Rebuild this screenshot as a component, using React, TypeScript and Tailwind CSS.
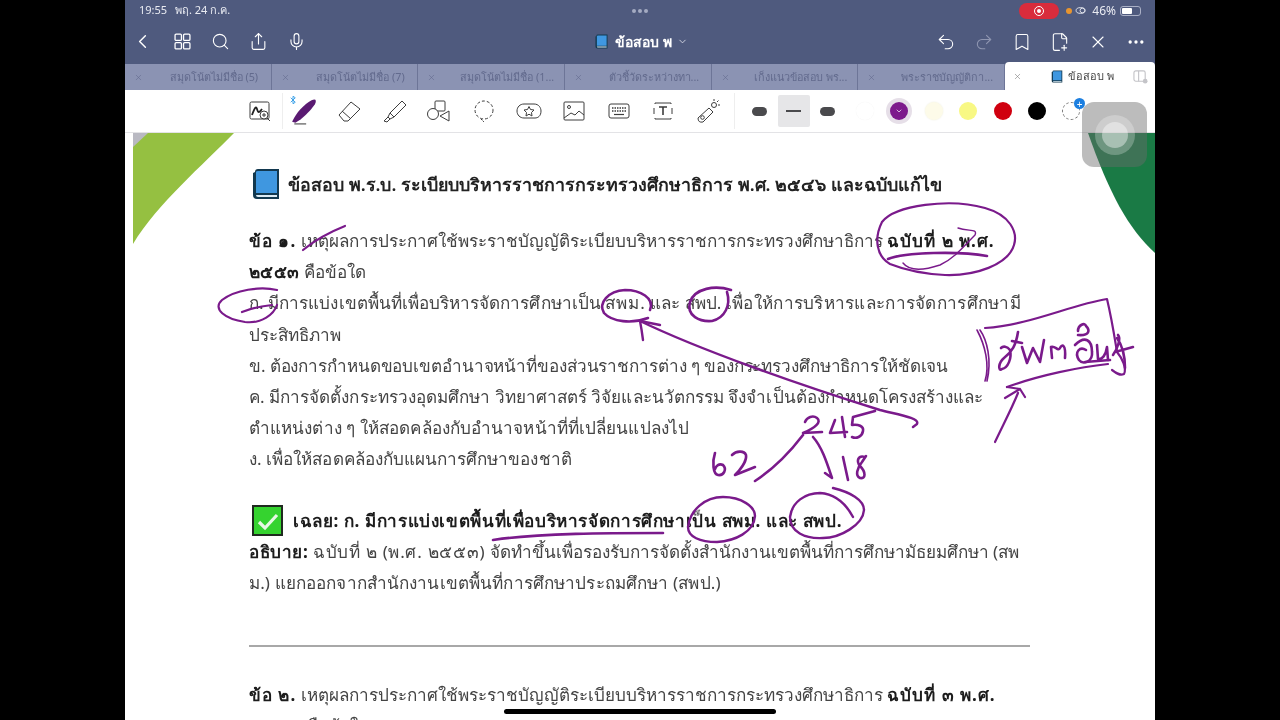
import { ChevronLeft, ChevronDown, Search, Share, Mic, Undo2, Redo2, Bookmark, FilePlus2, X, Ellipsis } from 'lucide-react'

const tabs = [
  'สมุดโน้ตไม่มีชื่อ (5)',
  'สมุดโน้ตไม่มีชื่อ (7)',
  'สมุดโน้ตไม่มีชื่อ (1...',
  'ตัวชี้วัดระหว่างทา...',
  'เก็งแนวข้อสอบ พร...',
  'พระราชบัญญัติกา...',
]

function BookIcon({ className }: { className: string }) {
  return (
    <svg viewBox="0 0 28 32" className={className}>
      <path d="M3 4 Q3 1 6 1 H27 V31 H5 Q1 31 1 27 V5 Z" fill="#12384f" />
      <path d="M4 4 Q4 3 6 3 H25 V25 H4 Z" fill="#3f97e0" />
      <path d="M4 27 H25 V29 H6 Q4 29 4 27 Z" fill="#dcebf5" />
    </svg>
  )
}

function StatusBar() {
  return (
    <div className="h-[21px] flex items-center pl-[14px] pr-[14px] text-[11px] text-[#e9ebf2]">
      <span className="w-[36px]">19:55</span>
      <span>พฤ. 24 ก.ค.</span>
      <div className="flex-1 flex justify-center gap-[2px] pl-[30px]">
        <span className="w-[4px] h-[4px] rounded-full bg-[#a4abc2]" />
        <span className="w-[4px] h-[4px] rounded-full bg-[#a4abc2]" />
        <span className="w-[4px] h-[4px] rounded-full bg-[#a4abc2]" />
      </div>
      <div className="w-[40px] h-[16px] rounded-full bg-[#d92c3c] flex items-center justify-center">
        <span className="w-[10px] h-[10px] rounded-full border border-white flex items-center justify-center">
          <span className="w-[4px] h-[4px] rounded-full bg-white" />
        </span>
      </div>
      <span className="w-[6px] h-[6px] rounded-full bg-[#e8952f] ml-[7px]" />
      <svg viewBox="0 0 14 10" className="w-[13px] h-[9px] ml-[3px]" fill="none" stroke="#e9ebf2" strokeWidth="1">
        <ellipse cx="6" cy="5" rx="5" ry="3.2" />
        <circle cx="8" cy="5" r="2.6" />
      </svg>
      <span className="ml-[4px] text-[12px]">46%</span>
      <div className="ml-[4px] w-[21px] h-[10px] rounded-[3px] border border-[#aab0c6] p-px">
        <div className="w-[10px] h-full rounded-[1px] bg-white" />
      </div>
    </div>
  )
}

function NavBar() {
  return (
    <div className="h-[41px] flex items-center text-white">
      <div className="w-[29px] flex justify-end">
        <ChevronLeft className="w-[23px] h-[23px]" strokeWidth={1.5} />
      </div>
      <div className="ml-[9px] w-[38px] flex justify-center">
        <svg viewBox="0 0 16 16" className="w-[17px] h-[17px]" fill="none" stroke="white" strokeWidth="1.2">
          <rect x="1" y="1" width="6" height="6" rx="1" />
          <rect x="9" y="1" width="6" height="6" rx="1" />
          <rect x="1" y="9" width="6" height="6" rx="1" />
          <rect x="9" y="9" width="6" height="6" rx="1" />
        </svg>
      </div>
      <div className="w-[38px] flex justify-center">
        <Search className="w-[19px] h-[19px]" strokeWidth={1.4} />
      </div>
      <div className="w-[38px] flex justify-center">
        <Share className="w-[19px] h-[19px]" strokeWidth={1.4} />
      </div>
      <div className="w-[38px] flex justify-center">
        <Mic className="w-[19px] h-[19px]" strokeWidth={1.4} />
      </div>
      <div className="ml-[280px] flex items-center">
        <BookIcon className="w-[13px] h-[15px]" />
        <span className="ml-[7px] text-[14px] font-semibold">ข้อสอบ พ</span>
        <ChevronDown className="ml-[5px] w-[11px] h-[11px] text-[#d5d8e4]" />
      </div>
      <div className="flex-1 flex items-center justify-end">
        <div className="w-[38px] flex justify-center">
          <Undo2 className="w-[20px] h-[20px]" strokeWidth={1.3} />
        </div>
        <div className="w-[38px] flex justify-center">
          <Redo2 className="w-[20px] h-[20px] text-[#8f96b1]" strokeWidth={1.3} />
        </div>
        <div className="w-[38px] flex justify-center">
          <Bookmark className="w-[20px] h-[20px]" strokeWidth={1.3} />
        </div>
        <div className="w-[38px] flex justify-center">
          <FilePlus2 className="w-[20px] h-[20px]" strokeWidth={1.3} />
        </div>
        <div className="w-[38px] flex justify-center">
          <X className="w-[20px] h-[20px]" strokeWidth={1.3} />
        </div>
        <div className="w-[38px] flex justify-center">
          <Ellipsis className="w-[20px] h-[20px]" strokeWidth={2} />
        </div>
      </div>
    </div>
  )
}

function TabBar() {
  return (
    <div className="h-[28px] flex items-end">
      {tabs.map((t) => (
        <div key={t} className="w-[146.7px] h-[26px] bg-[#8b93b3] border-r border-[#6d7597] flex items-center pl-[9px] text-[#626a8d]">
          <X className="w-[9px] h-[9px] shrink-0" strokeWidth={1.5} />
          <span className="flex-1 text-center pl-[14px] text-[10.8px] whitespace-nowrap">{t}</span>
        </div>
      ))}
      <div className="flex-1 h-[28px] bg-white rounded-t-[4px] flex items-center pl-[8px] text-[#444]">
        <X className="w-[9px] h-[9px] shrink-0 text-[#777]" strokeWidth={1.5} />
        <BookIcon className="ml-[29px] w-[12px] h-[13px]" />
        <span className="ml-[5px] text-[11px] font-medium">ข้อสอบ พ</span>
        <svg viewBox="0 0 16 16" className="ml-[19px] w-[15px] h-[15px]" fill="none" stroke="#c4c4c8" strokeWidth="1.2">
          <rect x="1" y="2" width="12" height="11" rx="2" />
          <path d="M6 2 V13" />
          <circle cx="13" cy="13" r="2.5" fill="#c4c4c8" stroke="none" />
        </svg>
      </div>
    </div>
  )
}

function ToolIcon({ children }: { children: React.ReactNode }) {
  return (
    <div className="w-[44.9px] h-full flex items-center justify-center">
      <svg viewBox="0 0 26 26" className="w-[26px] h-[26px]" fill="none" stroke="#3d3d3d" strokeWidth="1">
        {children}
      </svg>
    </div>
  )
}

function Swatch({ className }: { className: string }) {
  return (
    <div className="w-[34.4px] flex justify-center">
      <span className={`w-[18px] h-[18px] rounded-full ${className}`} />
    </div>
  )
}

function Toolbar() {
  return (
    <div className="h-[43px] border-b border-[#e3e3e6] flex items-center pl-[113px]">
      <ToolIcon>
        <rect x="3" y="4" width="19" height="17" rx="1.5" />
        <path d="M5 17 C8 9 9 8 10 11 C11 15 12 15 15 11" strokeWidth="1.8" stroke="#222" />
        <circle cx="17" cy="17" r="4" fill="white" />
        <path d="M15 17 H19 M17 15 V19 M20 20 L23 23" />
      </ToolIcon>
      <div className="w-[1px] h-[36px] bg-[#eeeeee] -mx-[1px]" />
      <div className="relative w-[44.9px] h-full flex items-center justify-center">
        <svg viewBox="0 0 26 26" className="w-[28px] h-[28px]">
          <path d="M2 23 C6 14 13 7 20 3 C24 1 25 3 23 7 C18 14 12 20 5 24 Z" fill="#5a1a72" />
          <path d="M4 25 H15" stroke="#444" strokeWidth="1" />
        </svg>
        <svg viewBox="0 0 8 12" className="absolute left-[8px] top-[5px] w-[6px] h-[10px]" fill="none" stroke="#2f9be6" strokeWidth="1.2">
          <path d="M1 3 L7 9 L4 11 V1 L7 3 L1 9" />
        </svg>
      </div>
      <ToolIcon>
        <path d="M3 17 L15 4 L24 11 L12 23 H8 Z" />
        <path d="M6 13 L15 21" />
      </ToolIcon>
      <ToolIcon>
        <path d="M9 15 L21 3 L25 7 L13 19 Z" />
        <path d="M9 15 L7 19 L9 21 L13 19 M7 19 L3 23 L6 24 L9 21" />
      </ToolIcon>
      <ToolIcon>
        <rect x="9" y="3" width="10" height="10" rx="1" />
        <circle cx="7" cy="16" r="5.5" fill="white" />
        <path d="M23 13 V23 L14 18 Z" fill="white" />
      </ToolIcon>
      <ToolIcon>
        <circle cx="13" cy="12" r="9" strokeDasharray="3 2" />
        <path d="M10 21 L13 24" strokeDasharray="2 1" />
      </ToolIcon>
      <ToolIcon>
        <path d="M8 6 H18 C23 6 25 10 25 13 C25 18 22 20 19 20 H8 C4 20 1 17 1 13 C1 9 4 6 8 6 Z" />
        <path d="M13 8.5 L14.5 11.5 L18 12 L15.5 14.5 L16 18 L13 16.2 L10 18 L10.5 14.5 L8 12 L11.5 11.5 Z" />
      </ToolIcon>
      <ToolIcon>
        <rect x="3" y="4" width="20" height="18" rx="1" />
        <circle cx="8" cy="9" r="1.5" />
        <path d="M3 20 L10 15 L14 17 L18 13 L23 17" />
      </ToolIcon>
      <ToolIcon>
        <rect x="3" y="6" width="20" height="14" rx="2" />
        <path d="M6 10 H20 M6 13 H20" strokeDasharray="1.5 1" strokeWidth="1.4" />
        <path d="M8 16.5 H18" strokeWidth="1.2" />
      </ToolIcon>
      <ToolIcon>
        <path d="M5 6 V5 H21 V6 M5 20 V21 H21 V20 M4 10 V16 M22 10 V16" />
        <path d="M9 9 H17 M13 9 V17" strokeWidth="1.6" />
      </ToolIcon>
      <ToolIcon>
        <path d="M3 20 L14 10 L18 14 L8 24 Q3 25 3 20 Z" />
        <circle cx="7.5" cy="19.5" r="1.8" />
        <circle cx="19" cy="7" r="2.5" />
        <path d="M19 1 V3 M25 7 H23 M23.5 2.5 L22 4" />
      </ToolIcon>
      <div className="w-[1px] h-[36px] bg-[#eeeeee] ml-[3px] mr-[8px]" />
      <div className="w-[34px] flex justify-center">
        <span className="w-[15px] h-[9px] rounded-full bg-[#4a4a4d]" />
      </div>
      <div className="w-[32px] h-[32px] mx-px bg-[#e6e6e8] rounded-[2px] flex items-center justify-center">
        <span className="w-[15px] h-[2px] bg-[#4a4a4d]" />
      </div>
      <div className="w-[34px] flex justify-center">
        <span className="w-[15px] h-[9px] rounded-full bg-[#4a4a4d]" />
      </div>
      <div className="w-[3px]" />
      <Swatch className="bg-white shadow-[0_0_1px_#efefef]" />
      <div className="w-[34.4px] flex justify-center">
        <span className="w-[18px] h-[18px] rounded-full bg-[#7d1a8c] ring-[4px] ring-[#e6dfe8] flex items-center justify-center">
          <ChevronDown className="w-[8px] h-[8px] text-white" />
        </span>
      </div>
      <Swatch className="bg-[#fdfbe9] shadow-[0_0_2px_#eeeee0]" />
      <Swatch className="bg-[#f8f884]" />
      <Swatch className="bg-[#d0000f]" />
      <Swatch className="bg-black" />
      <div className="relative w-[34.4px] flex justify-center">
        <span className="w-[18px] h-[18px] rounded-full border border-dashed border-[#777]" />
        <span className="absolute left-[20px] -top-[4px] w-[11px] h-[11px] rounded-full bg-[#1c7fe0] text-white flex items-center justify-center text-[10px] leading-none">+</span>
      </div>
    </div>
  )
}

function Line({ children, className = '' }: { children: React.ReactNode; className?: string }) {
  return <div className={`h-[31.2px] leading-[31.2px] whitespace-nowrap ${className}`}>{children}</div>
}

function Bold({ children }: { children: React.ReactNode }) {
  return <b className="font-bold text-[#1c1c1c] tracking-[1px]">{children}</b>
}

function Page() {
  return (
    <div className="relative flex-1 bg-white overflow-hidden pt-[33px] pl-[124px] text-[17.1px] text-[#444444]">
      {/* cover art in the page corners */}
      <svg viewBox="0 0 101 111" className="absolute left-[8px] top-0 w-[101px] h-[111px]">
        <path d="M0 0 H101 C70 32 25 70 0 111 Z" fill="#95c041" />
        <path d="M0 0 H15 L0 14 Z" fill="#b9b9c2" />
      </svg>
      <svg viewBox="0 0 67 120" className="absolute right-0 top-0 w-[67px] h-[120px]">
        <path d="M0 0 H67 V120 C40 95 22 62 0 0 Z" fill="#1a7a45" />
      </svg>

      <div className="relative h-[36px] flex items-center">
        <BookIcon className="ml-[3px] w-[28px] h-[32px]" />
        <span className="ml-[8px] text-[17.85px] font-semibold text-[#222] whitespace-nowrap">
          ข้อสอบ พ.ร.บ. ระเบียบบริหารราชการกระทรวงศึกษาธิการ พ.ศ. ๒๕๔๖ และฉบับแก้ไข
        </span>
      </div>

      <div className="relative mt-[23px]">
        <Line><Bold>ข้อ ๑.</Bold> เหตุผลการประกาศใช้พระราชบัญญัติระเบียบบริหารราชการกระทรวงศึกษาธิการ <Bold>ฉบับที่ ๒ พ.ศ.</Bold></Line>
        <Line><b className="font-bold text-[#1c1c1c] tracking-[0.4px]">๒๕๕๓</b> คือข้อใด</Line>
        <Line>
          <span className="tracking-[0.05px]">ก. มีการแบ่งเขตพื้นที่เพื่อบริหารจัดการศึกษาเป็น </span>
          <span className="tracking-[1px]">สพม.</span> และ สพป. <span className="tracking-[0.28px]">เพื่อให้การบริหารและการจัดการศึกษามี</span>
        </Line>
        <Line>ประสิทธิภาพ</Line>
        <Line className="tracking-[-0.11px]">ข. ต้องการกำหนดขอบเขตอำนาจหน้าที่ของส่วนราชการต่าง ๆ ของกระทรวงศึกษาธิการให้ชัดเจน</Line>
        <Line className="tracking-[0.04px]">ค. มีการจัดตั้งกระทรวงอุดมศึกษา วิทยาศาสตร์ วิจัยและนวัตกรรม จึงจำเป็นต้องกำหนดโครงสร้างและ</Line>
        <Line className="tracking-[0.1px]">ตำแหน่งต่าง ๆ ให้สอดคล้องกับอำนาจหน้าที่ที่เปลี่ยนแปลงไป</Line>
        <Line className="tracking-[0.05px]">ง. เพื่อให้สอดคล้องกับแผนการศึกษาของชาติ</Line>

        <div className="mt-[31px] h-[30px] flex items-center whitespace-nowrap">
          <span className="ml-[3px] w-[31px] h-[31px] bg-[#35d32f] border-2 border-[#1f2a1f] flex items-center justify-center shrink-0">
            <svg viewBox="0 0 24 24" className="w-[24px] h-[24px]" fill="none" stroke="#e8f8e4" strokeWidth="3.2">
              <path d="M3 13 L9 19 L21 6" />
            </svg>
          </span>
          <span className="ml-[10px] font-bold text-[#1c1c1c] tracking-[0.62px]">เฉลย: ก. มีการแบ่งเขตพื้นที่เพื่อบริหารจัดการศึกษาเป็น สพม. และ สพป.</span>
        </div>
        <Line><b className="font-bold text-[#1c1c1c] tracking-[0.6px]">อธิบาย:</b> <span className="tracking-[0.7px]">ฉบับที่ ๒ (พ.ศ. ๒๕๕๓)</span> จัดทำขึ้นเพื่อรองรับการจัดตั้งสำนักงานเขตพื้นที่การศึกษามัธยมศึกษา (สพ</Line>
        <Line className="tracking-[0.13px]">ม.) แยกออกจากสำนักงานเขตพื้นที่การศึกษาประถมศึกษา (สพป.)</Line>

        <div className="mt-[47px] w-[781px] h-[2px] bg-[#a8a8a8]" />

        <Line className="mt-[32px]"><Bold>ข้อ ๒.</Bold> เหตุผลการประกาศใช้พระราชบัญญัติระเบียบบริหารราชการกระทรวงศึกษาธิการ <Bold>ฉบับที่ ๓ พ.ศ.</Bold></Line>
        <Line><Bold>๒๕๕๙</Bold> คือข้อใด</Line>
      </div>
    </div>
  )
}

// pen strokes, in page coordinates
function Ink() {
  return (
    <svg viewBox="0 0 1280 720" className="absolute inset-0 w-[1280px] h-[720px] pointer-events-none" fill="none" stroke="#7a1a8b" strokeWidth="2.2" strokeLinecap="round" strokeLinejoin="round">
      <path d="M303 250 C315 240 330 232 345 226" />
      <path d="M277 290 C260 286 235 290 222 300 C212 309 225 319 245 322 C262 324 274 314 277 305" />
      <path d="M242 312 C252 308 262 306 272 305" />

      <path d="M882 222 C895 205 950 198 985 208 C1010 215 1018 232 1014 245 C1008 265 975 276 945 275 C925 274 905 270 890 264 C876 256 874 238 882 222" />
      <path d="M888 259 C905 252 960 251 987 256" strokeWidth="2.6" />
      <path d="M903 263 C910 272 925 270 940 265 C955 258 965 245 975 235 C978 228 968 232 958 228" strokeWidth="1.4" />

      <path d="M650 310 C655 298 640 290 625 290 C608 291 598 303 604 313 C612 322 632 324 648 318" strokeWidth="2.6" />
      <path d="M731 290 C715 285 695 288 690 302 C686 316 700 322 712 321 C725 318 731 305 727 292" strokeWidth="2.6" />

      <path d="M640 321 C700 350 800 385 880 410 C900 415 920 418 917 424 L913 427" strokeWidth="2.4" />
      <path d="M643 340 C642 332 641 326 640 321 L660 325" strokeWidth="2.4" />

      <path d="M985 328 C1030 325 1070 305 1107 299 C1112 320 1115 340 1117 352" />
      <path d="M977 330 C985 345 990 365 985 381 M980 330 C987 340 992 360 987 381" strokeWidth="1.6" />
      <path d="M1007 387 C1040 375 1080 367 1108 364" />
      <path d="M1117 352 C1122 358 1127 368 1124 374 C1120 376 1116 373 1112 370" />

      <g strokeWidth="2.6">
        <path d="M1018 332 C1016 345 1012 352 1004 358 C998 363 998 372 1002 369 C1008 368 1012 358 1010 350 C1007 346 1003 346 1001 348" />
        <path d="M1012 341 L1022 343" />
        <path d="M1022 347 L1027 363 L1033 348 L1040 362 L1044 340" />
        <path d="M1052 358 L1051 347 C1055 345 1058 352 1060 348 C1062 344 1066 344 1065 358" />
        <path d="M1075 345 C1085 335 1092 340 1092 352 C1093 362 1083 365 1079 360 C1074 352 1080 346 1086 350" />
        <path d="M1078 331 C1078 325 1085 322 1086 326 C1090 330 1090 336 1078 335" />
        <path d="M1097 345 L1098 359 C1102 360 1106 355 1107 347 L1108 360" />
        <path d="M1085 362 L1110 360" />
        <path d="M1113 355 C1118 348 1121 338 1118 335 M1115 352 L1133 347 M1117 338 C1122 345 1125 355 1125 368" />
      </g>

      <path d="M995 442 C1003 425 1012 408 1018 393" />
      <path d="M1005 398 L1020 389 L1025 397 M1007 387 L1020 389" />

      <g strokeWidth="2.6">
        <path d="M805 422 C807 417 813 415 817 418 C822 422 815 428 803 433 L822 432" />
        <path d="M835 420 L830 433 L847 432 M842 417 L845 437" />
        <path d="M875 411 L853 417 L852 425 C858 424 864 426 863 431 C862 437 856 439 852 437" />
        <path d="M755 481 C775 468 790 452 803 435" />
        <path d="M813 437 C822 447 827 463 832 478 L825 473" />
        <path d="M715 453 C712 462 713 474 718 475 C724 476 727 469 723 465 C719 463 716 466 715 469" />
        <path d="M732 455 C736 451 744 450 746 455 C747 461 740 470 735 475 L755 467" />
        <path d="M843 457 L848 480" />
        <path d="M865 457 C858 455 856 461 860 466 C866 472 866 479 860 478 C855 476 857 468 862 462 L866 456" />
      </g>

      <path d="M493 540 C540 533 610 533 663 533" strokeWidth="2.6" />
      <path d="M688 527 C690 510 705 497 723 497 C742 497 755 507 755 516 C754 532 735 541 717 542 C700 542 688 537 688 527" strokeWidth="2.4" />
      <path d="M790 517 C792 502 805 493 820 493 C835 494 846 504 853 517 M833 488 C850 492 864 500 864 510 C863 525 840 538 823 538 C805 539 790 532 790 517" strokeWidth="2.4" />
    </svg>
  )
}

export default function App() {
  return (
    <div className="relative w-[1280px] h-[720px] bg-black overflow-hidden flex justify-center font-['Noto_Sans','Liberation_Sans',sans-serif] blur-[0.4px]">
      <div className="relative w-[1030px] h-[720px] flex flex-col bg-white">
        <div className="bg-[#4f5a7e]">
          <StatusBar />
          <NavBar />
          <TabBar />
        </div>
        <Toolbar />
        <Page />
      </div>
      <div className="absolute left-0 top-0 w-[1280px] h-[720px] pointer-events-none">
        <Ink />
        {/* assistive touch button */}
        <div className="absolute left-[1082px] top-[102px] w-[65px] h-[65px] rounded-[12px] bg-[#6b6b6b]/45 flex items-center justify-center">
          <span className="w-[40px] h-[40px] rounded-full bg-white/25 flex items-center justify-center">
            <span className="w-[26px] h-[26px] rounded-full bg-white/40" />
          </span>
        </div>
        <div className="absolute left-[504px] top-[709px] w-[272px] h-[5px] rounded-full bg-black" />
      </div>
    </div>
  )
}
